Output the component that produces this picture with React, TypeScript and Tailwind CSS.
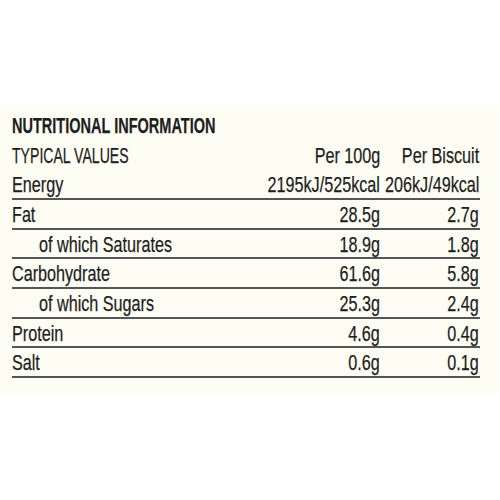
const rows = [
  { label: "Fat", a: "28.5g", b: "2.7g" },
  { label: "of which Saturates", a: "18.9g", b: "1.8g", sub: true },
  { label: "Carbohydrate", a: "61.6g", b: "5.8g" },
  { label: "of which Sugars", a: "25.3g", b: "2.4g", sub: true },
  { label: "Protein", a: "4.6g", b: "0.4g" },
  { label: "Salt", a: "0.6g", b: "0.1g" },
];

// the label face is very condensed, so squeeze a regular sans
function Txt({ children, right, caps }: { children: React.ReactNode; right?: boolean; caps?: boolean }) {
  return (
    <span
      className={`inline-block shrink-0 whitespace-nowrap ${right ? "origin-right" : "origin-left"} ${
        caps ? "scale-x-[0.64]" : "scale-x-[0.735]"
      }`}
    >
      {children}
    </span>
  );
}

function Num({ children, last }: { children: React.ReactNode; last?: boolean }) {
  return (
    <div className={`flex justify-end ${last ? "pr-[1px]" : ""}`}>
      <Txt right>{children}</Txt>
    </div>
  );
}

export default function App() {
  return (
    <div className="w-[500px] h-[500px] bg-white pt-[105px] font-['Liberation_Sans',Arial,sans-serif] text-[#1e1e1e]">
      <div className="w-[498px] h-[288px] bg-[#fdfdf4] pl-[12px] pt-[6px]">
        <div className="w-[468px] text-[22px] leading-[29.67px] [-webkit-text-stroke:0.25px_#1e1e1e]">
          <div className="h-[29.67px] font-bold">
            <span className="inline-block whitespace-nowrap origin-left scale-x-[0.66]">
              NUTRITIONAL INFORMATION
            </span>
          </div>

          <div className="grid grid-cols-[1fr_100px_100px] h-[29.67px]">
            <div>
              <Txt caps>TYPICAL VALUES</Txt>
            </div>
            <Num>Per 100g</Num>
            <Num last>Per Biscuit</Num>
          </div>

          <div className="grid grid-cols-[1fr_100px_100px] h-[29.67px] border-b-2 border-[#555]">
            <div>
              <Txt>Energy</Txt>
            </div>
            <Num>2195kJ/525kcal</Num>
            <Num last>206kJ/49kcal</Num>
          </div>

          {rows.map((r) => (
            <div
              key={r.label}
              className="grid grid-cols-[1fr_100px_100px] h-[29.67px] border-b-2 border-[#555]"
            >
              <div className={r.sub ? "pl-[27px]" : ""}>
                <Txt>{r.label}</Txt>
              </div>
              <Num>{r.a}</Num>
              <Num last>{r.b}</Num>
            </div>
          ))}
        </div>
      </div>
    </div>
  );
}
